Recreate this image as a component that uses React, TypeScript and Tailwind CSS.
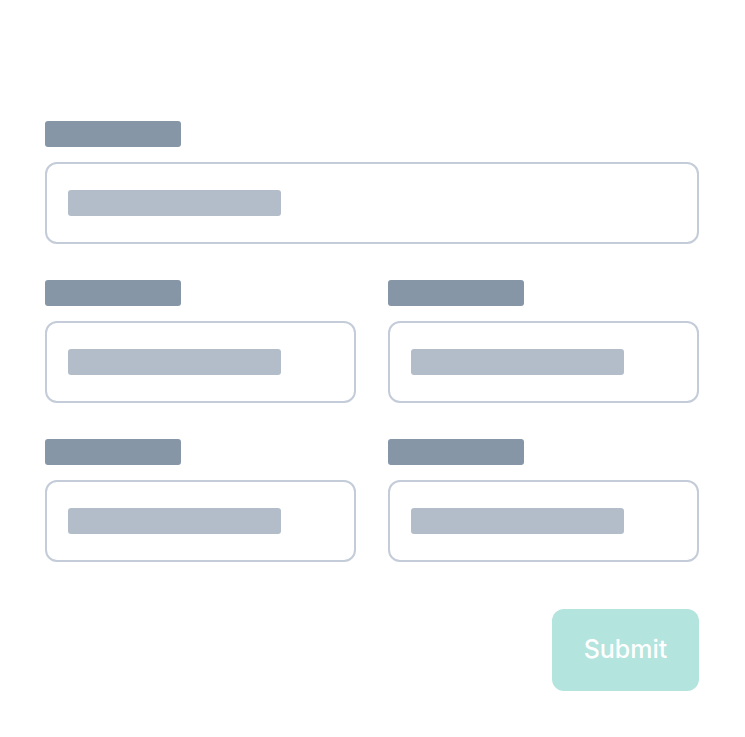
import React from "react";

const Field: React.FC = () => (
  <div className="flex flex-col gap-[15px]">
    <div className="h-[26px] w-[136px] rounded-[3px] bg-[#8696a7]" />
    <div className="flex h-[82px] items-center rounded-xl border-2 border-[#c3ccd8] bg-white px-[21px]">
      <div className="h-[26px] w-[213px] rounded-[3px] bg-[#b3bdc9]" />
    </div>
  </div>
);

const App: React.FC = () => {
  return (
    <div className="h-[737px] w-[745px] bg-white">
      <div className="flex h-full w-full flex-col rounded-[14px] bg-white pl-[45px] pr-[46px] pt-[121px]">
        {/* Form rows */}
        <div className="flex flex-col gap-[36px]">
          <Field />
          <div className="grid grid-cols-2 gap-x-[32px] gap-y-[36px]">
            <Field />
            <Field />
            <Field />
            <Field />
          </div>
        </div>

        <div className="mt-[47px] flex justify-end">
          <button
            className="flex h-[82px] w-[147px] items-center justify-center rounded-xl bg-[#b3e4de] text-[25px] font-medium text-white"
            style={{ fontFamily: "Inter, 'Noto Sans', sans-serif" }}
          >
            Submit
          </button>
        </div>
      </div>
    </div>
  );
};

export default App;
